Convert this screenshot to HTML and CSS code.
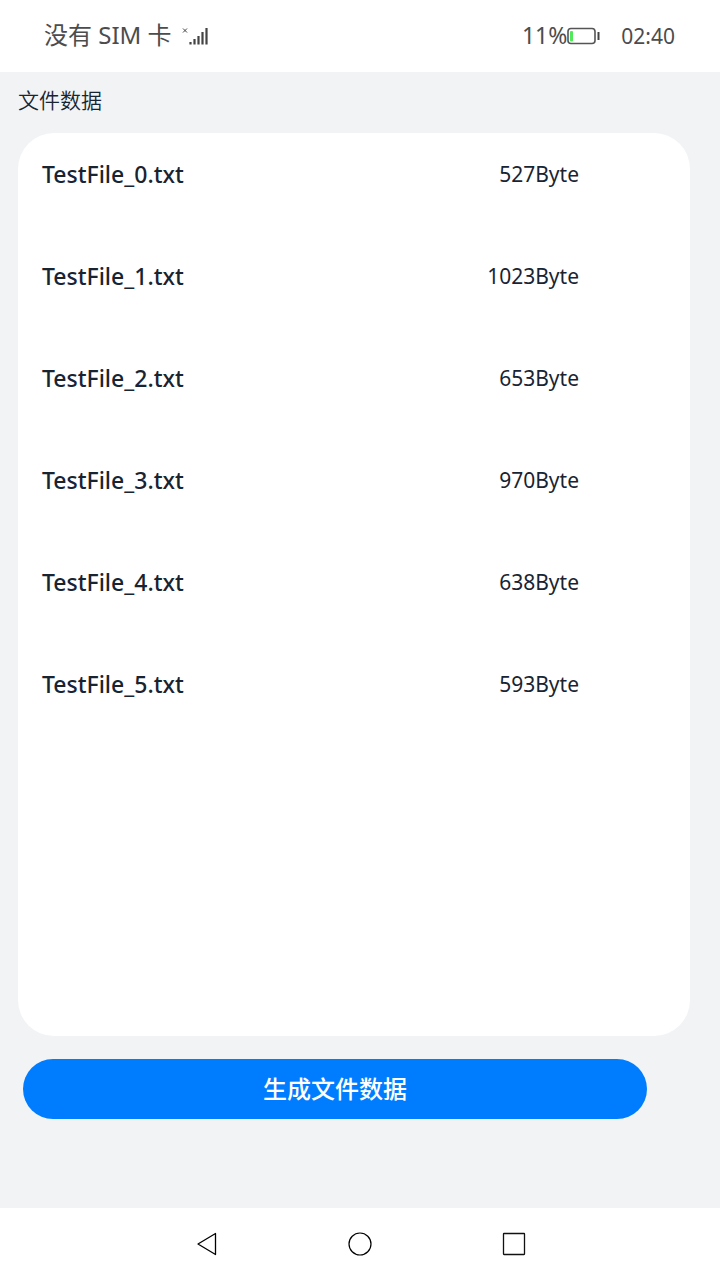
FILE: index.html
```html
<!DOCTYPE html>
<html lang="zh-CN">
<head>
<meta charset="utf-8">
<meta name="viewport" content="width=device-width, initial-scale=1">
<title>文件数据</title>
<link rel="stylesheet" href="styles.css">
</head>
<body>
<header class="status">
  <span class="carrier">没有 SIM 卡</span>
  <svg class="signal" width="26" height="18" viewBox="0 0 26 18" fill="none" stroke="#444" aria-hidden="true">
    <path d="M1 1.500l4 4M5 1.500l-4 4"/>
    <path stroke-width="2.200" d="M8.500 15v2.500M12.500 12v5.500M16.500 9v8.500M20.500 5v12.500M24.500 1v16.500"/>
  </svg>
  <span class="battery-level">11%</span>
  <svg class="battery" width="34" height="18" viewBox="0 0 34 18" fill="none" aria-hidden="true">
    <rect x="1" y="1.500" width="27" height="15" rx="3" stroke="#555" stroke-width="1.600"/>
    <rect x="3" y="4" width="3" height="10.500" rx="1" fill="#52e85c"/>
    <path d="M31.500 5v8" stroke="#444" stroke-width="2"/>
  </svg>
  <time class="clock">02:40</time>
</header>
<main class="page">
  <h1 class="title">文件数据</h1>
  <ul class="files">
    <li class="file"><span class="name">TestFile_0.txt</span><span class="size">527Byte</span></li>
    <li class="file"><span class="name">TestFile_1.txt</span><span class="size">1023Byte</span></li>
    <li class="file"><span class="name">TestFile_2.txt</span><span class="size">653Byte</span></li>
    <li class="file"><span class="name">TestFile_3.txt</span><span class="size">970Byte</span></li>
    <li class="file"><span class="name">TestFile_4.txt</span><span class="size">638Byte</span></li>
    <li class="file"><span class="name">TestFile_5.txt</span><span class="size">593Byte</span></li>
  </ul>
  <button class="generate" type="button">生成文件数据</button>
</main>
<nav class="system-nav" aria-label="系统导航">
  <button class="nav-button" type="button" aria-label="返回">
    <svg width="24" height="24" viewBox="0 0 24 24" fill="none" stroke="#000" stroke-width="1.300" stroke-linejoin="round"><path d="M21.500 1.500v21L4 12z"/></svg>
  </button>
  <button class="nav-button" type="button" aria-label="主页">
    <svg width="24" height="24" viewBox="0 0 24 24" fill="none" stroke="#000" stroke-width="1.200"><circle cx="12" cy="12" r="11"/></svg>
  </button>
  <button class="nav-button" type="button" aria-label="最近任务">
    <svg width="24" height="24" viewBox="0 0 24 24" fill="none" stroke="#111" stroke-width="1.300"><rect x="1.500" y="1.500" width="21" height="21" rx="0.500"/></svg>
  </button>
</nav>
</body>
</html>
```
FILE: styles.css
```css
* {
  box-sizing: border-box;
}

body {
  margin: 0;
  min-height: 100vh;
  display: flex;
  flex-direction: column;
  background: #fff;
  color: #182431;
  font-family: "Noto Sans", "Noto Sans CJK SC", sans-serif;
}

.status {
  display: flex;
  align-items: center;
  height: 72px;
  padding: 0 45px 0 44px;
  color: #4c4c4c;
  font-size: 24px;
  line-height: 32px;
}

.carrier,
.battery-level {
  padding-bottom: 3px;
}

.signal {
  margin-left: 10px;
}

.battery-level {
  margin-left: auto;
  font-size: 23px;
}

.clock {
  margin-left: 20px;
  padding-bottom: 1px;
  font-size: 21px;
}

.page {
  flex: 1;
  display: flex;
  flex-direction: column;
  padding: 0 30px 0 18px;
  background: #f1f3f5;
}

.title {
  margin: 14px 0 19px;
  font-size: 21px;
  font-weight: 350;
  line-height: 28px;
}

.files {
  flex: 1;
  margin: 0;
  padding: 0 111px 0 24px;
  list-style: none;
  background: #fff;
  border-radius: 36px;
}

.file {
  display: flex;
  justify-content: space-between;
  height: 102px;
  padding-top: 23px;
  line-height: 36px;
}

.name {
  font-size: 23px;
  font-weight: 500;
}

.size {
  font-size: 21px;
}

.generate {
  height: 60px;
  margin: 23px 43px 89px 5px;
  padding: 0 0 4px;
  border: 0;
  border-radius: 30px;
  background: #007dff;
  color: #fff;
  font: 500 24px "Noto Sans CJK SC", sans-serif;
}

.system-nav {
  display: grid;
  grid-template-columns: repeat(3, 1fr);
  height: 72px;
  padding: 0 18%;
}

.nav-button {
  display: grid;
  place-items: center;
  padding: 0;
  border: 0;
  background: none;
}
```
